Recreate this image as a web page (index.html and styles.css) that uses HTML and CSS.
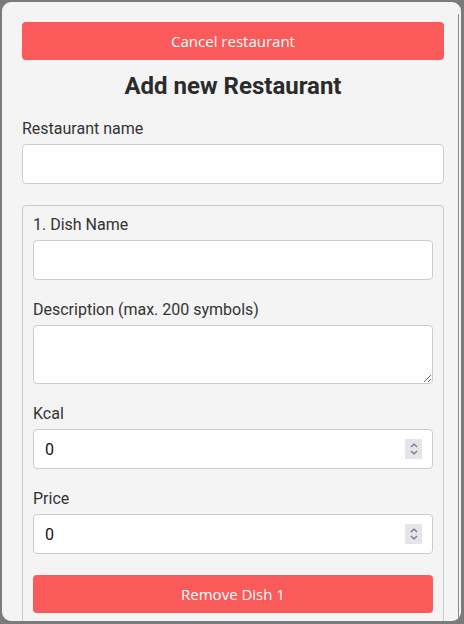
FILE: index.html
```html
<!DOCTYPE html>
<html>
<head>
<meta charset="utf-8">
<link rel="stylesheet" href="styles.css">
</head>
<body>
<div class="panel">
  <div class="content">
    <button class="btn-red">Cancel restaurant</button>
    <h1 class="title">Add new Restaurant</h1>
    <div class="field">
      <label class="label">Restaurant name</label>
      <input class="input" type="text">
    </div>
    <div class="dish">
      <div class="field">
        <label class="label">1. Dish Name</label>
        <input class="input" type="text">
      </div>
      <div class="field">
        <label class="label">Description (max. 200 symbols)</label>
        <textarea class="textarea"></textarea>
      </div>
      <div class="field">
        <label class="label">Kcal</label>
        <div class="number">
          <input class="number-input" type="text" value="0">
          <span class="spin"><svg width="12" height="16" viewBox="0 0 12 16"><path d="M3 6 L6 3 L9 6" fill="none" stroke="#6f6f7a" stroke-width="1.2"/><path d="M3 10 L6 13 L9 10" fill="none" stroke="#6f6f7a" stroke-width="1.2"/></svg></span>
        </div>
      </div>
      <div class="field">
        <label class="label">Price</label>
        <div class="number">
          <input class="number-input" type="text" value="0">
          <span class="spin"><svg width="12" height="16" viewBox="0 0 12 16"><path d="M3 6 L6 3 L9 6" fill="none" stroke="#6f6f7a" stroke-width="1.2"/><path d="M3 10 L6 13 L9 10" fill="none" stroke="#6f6f7a" stroke-width="1.2"/></svg></span>
        </div>
      </div>
      <button class="btn-red">Remove Dish 1</button>
    </div>
  </div>
  <div class="scrollline"></div>
</div>
</body>
</html>
```

FILE: styles.css
```css
html, body {
  margin: 0;
  padding: 0;
  background: #7b7b7b;
}
body {
  width: 464px;
  height: 624px;
  overflow: hidden;
  font-family: Roboto, "Liberation Sans", sans-serif;
  color: #333333;
}
.panel {
  margin: 2px 0 0 2px;
  width: 459px;
  height: 619px;
  background: #f4f4f4;
  border-radius: 9px;
  overflow: hidden;
  display: flex;
}
.content {
  flex: 1;
  padding: 20px 14px 0 20px;
  overflow: hidden;
}
.scrollline {
  width: 1px;
  background: #8a8a8a;
  margin: 12px 2px 0 0;
}
.btn-red {
  display: block;
  width: 100%;
  height: 38px;
  border: none;
  border-radius: 4px;
  background: #fa5a5a;
  color: #ffffff;
  font-family: "Open Sans", "Noto Sans", sans-serif;
  font-size: 15px;
  padding: 0;
}
.title {
  margin: 14px 0 0 0;
  text-align: center;
  font-size: 24px;
  font-weight: 700;
  line-height: 25px;
  color: #2b2b2b;
}
.field {
  display: flex;
  flex-direction: column;
  margin-top: 20px;
}
.dish .field:first-child {
  margin-top: 0;
}
.label {
  font-size: 16px;
  line-height: 19px;
  margin-bottom: 6px;
  color: #333333;
}
.input {
  box-sizing: border-box;
  height: 40px;
  border: 1px solid #cccccc;
  border-radius: 4px;
  background: #ffffff;
  margin: 0;
}
.textarea {
  box-sizing: border-box;
  height: 59px;
  border: 1px solid #cccccc;
  border-radius: 4px;
  background: #ffffff;
  margin: 0;
  resize: vertical;
}
.dish {
  margin-top: 21px;
  border: 1px solid #c8c8c8;
  border-radius: 4px;
  padding: 9px 10px 10px 10px;
}
.dish .btn-red {
  margin-top: 21px;
}
.number {
  box-sizing: border-box;
  height: 40px;
  border: 1px solid #cccccc;
  border-radius: 4px;
  background: #ffffff;
  display: flex;
  align-items: center;
  padding: 0 10px 0 11px;
}
.number-input {
  flex: 1;
  border: none;
  outline: none;
  padding: 0;
  margin: 0;
  background: transparent;
  font-family: Roboto, "Liberation Sans", sans-serif;
  font-size: 16px;
  color: #111111;
}
.spin {
  width: 17px;
  height: 20px;
  background: #e4e4ea;
  display: flex;
  align-items: center;
  justify-content: center;
}
```
